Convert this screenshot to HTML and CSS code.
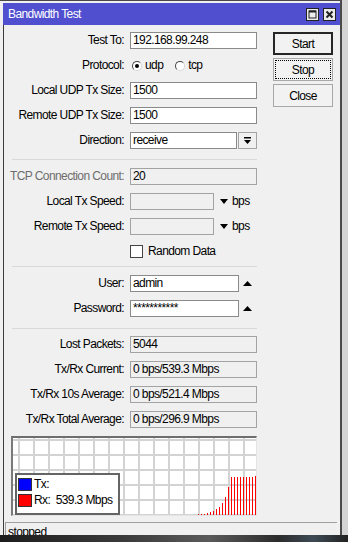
FILE: index.html
```html
<!DOCTYPE html>
<html lang="en">
<head>
  <meta charset="UTF-8" />
  <meta name="viewport" content="width=device-width, initial-scale=1.0"/>
  <title>Bandwidth Test</title>
  <link rel="stylesheet" href="styles.css">
</head>
<body>
  <div class="screen">
    <div class="window">
      <div class="titlebar">
        <span class="title">Bandwidth Test</span>
        <span class="tb-buttons">
          <span class="tb-btn">
            <svg width="11" height="11" viewBox="0 0 11 11"><rect x="2" y="2" width="7" height="7" fill="none" stroke="#222" stroke-width="1"/><rect x="2" y="1.5" width="7" height="2" fill="#222"/></svg>
          </span>
          <span class="tb-btn">
            <svg width="11" height="11" viewBox="0 0 11 11"><path d="M2.5 2.5 L8.5 8.5 M8.5 2.5 L2.5 8.5" stroke="#222" stroke-width="2"/></svg>
          </span>
        </span>
      </div>

      <div class="client">
        <div class="main">
          <div class="form">
            <div class="row">
              <label>Test To:</label>
              <div class="field"><input type="text" class="input" value="192.168.99.248"></div>
            </div>
            <div class="row">
              <label>Protocol:</label>
              <div class="field radios">
                <span class="radio checked"></span><span class="opt">udp</span>
                <span class="radio second"></span><span class="opt">tcp</span>
              </div>
            </div>
            <div class="row">
              <label>Local UDP Tx Size:</label>
              <div class="field"><input type="text" class="input" value="1500"></div>
            </div>
            <div class="row">
              <label>Remote UDP Tx Size:</label>
              <div class="field"><input type="text" class="input" value="1500"></div>
            </div>
            <div class="row">
              <label>Direction:</label>
              <div class="field">
                <input type="text" class="input w-dir" value="receive">
                <span class="drop-btn">
                  <svg width="7" height="7" viewBox="0 0 7 7"><rect x="0" y="0" width="7" height="1.5" fill="#000"/><polygon points="0,3 7,3 3.5,7" fill="#000"/></svg>
                </span>
              </div>
            </div>

            <div class="sep sep-1"></div>

            <div class="row">
              <label class="disabled">TCP Connection Count:</label>
              <div class="field"><input type="text" class="input ro" value="20"></div>
            </div>
            <div class="row">
              <label>Local Tx Speed:</label>
              <div class="field">
                <input type="text" class="input ro w-speed" value="">
                <svg class="arrow-down" width="8" height="5" viewBox="0 0 8 5"><polygon points="0,0 8,0 4,5" fill="#000"/></svg>
                <span class="unit">bps</span>
              </div>
            </div>
            <div class="row">
              <label>Remote Tx Speed:</label>
              <div class="field">
                <input type="text" class="input ro w-speed" value="">
                <svg class="arrow-down" width="8" height="5" viewBox="0 0 8 5"><polygon points="0,0 8,0 4,5" fill="#000"/></svg>
                <span class="unit">bps</span>
              </div>
            </div>
            <div class="row">
              <label></label>
              <div class="field"><span class="check"></span><span class="opt">Random Data</span></div>
            </div>

            <div class="sep sep-2"></div>

            <div class="row">
              <label>User:</label>
              <div class="field">
                <input type="text" class="input w-user" value="admin">
                <svg class="arrow-up" width="9" height="5" viewBox="0 0 9 5"><polygon points="0,5 9,5 4.5,0" fill="#000"/></svg>
              </div>
            </div>
            <div class="row">
              <label>Password:</label>
              <div class="field">
                <input type="text" class="input w-user" value="***********">
                <svg class="arrow-up" width="9" height="5" viewBox="0 0 9 5"><polygon points="0,5 9,5 4.5,0" fill="#000"/></svg>
              </div>
            </div>

            <div class="sep sep-3"></div>

            <div class="row">
              <label>Lost Packets:</label>
              <div class="field"><input type="text" class="input ro" value="5044"></div>
            </div>
            <div class="row">
              <label>Tx/Rx Current:</label>
              <div class="field"><input type="text" class="input ro" value="0 bps/539.3 Mbps"></div>
            </div>
            <div class="row">
              <label>Tx/Rx 10s Average:</label>
              <div class="field"><input type="text" class="input ro" value="0 bps/521.4 Mbps"></div>
            </div>
            <div class="row">
              <label>Tx/Rx Total Average:</label>
              <div class="field"><input type="text" class="input ro" value="0 bps/296.9 Mbps"></div>
            </div>

            <div class="graph">
              <div class="bars" id="bars"></div>
              <div class="legend">
                <div class="legend-row"><span class="swatch tx"></span><span>Tx:</span></div>
                <div class="legend-row"><span class="swatch rx"></span><span>Rx:  539.3 Mbps</span></div>
              </div>
            </div>
          </div>

          <div class="buttons">
            <button class="btn default">Start</button>
            <button class="btn focused">Stop</button>
            <button class="btn">Close</button>
          </div>
        </div>

        <div class="status">stopped</div>
      </div>
    </div>
  </div>
  <div class="desktop"></div>

  <script>
    // rx samples, oldest first (px high)
    const rx = [1, 1, 1, 2, 3, 4, 6, 8, 12, 18, 28, 38, 38, 38, 38, 38, 38, 38, 38, 39];
    const bars = document.getElementById("bars");
    rx.forEach(h => {
      const bar = document.createElement("span");
      bar.className = "bar";
      bar.style.height = h + "px";
      bars.appendChild(bar);
    });
  </script>
</body>
</html>
```

FILE: styles.css
```css
* {
  box-sizing: border-box;
}
body {
  margin: 0;
  background: #d4d4d4;
  font-family: "Liberation Sans", Arial, sans-serif;
  font-size: 12px;
  letter-spacing: -0.6px;
  color: #000;
}
.screen {
  height: 535px;
  overflow: hidden;
}
.window {
  width: 342px;
  height: 560px;
  background: #f0f0f0;
  border-top: 1px solid #4a4a4a;
  border-right: 2px solid #4a4a4a;
  padding: 2px 0 0 3px;
}
.titlebar {
  height: 22px;
  background: #4f4fcf;
  display: flex;
  align-items: center;
  justify-content: space-between;
  padding: 0 4px 0 5px;
}
.title {
  color: #fff;
  font-size: 12px;
}
.tb-buttons {
  display: flex;
  gap: 4px;
}
.tb-btn {
  width: 13px;
  height: 13px;
  background: #ececec;
  border: 1px solid #222;
  display: flex;
  align-items: center;
  justify-content: center;
}
.client {
  border-left: 1px solid #3c3c3c;
  height: 540px;
}
.main {
  display: flex;
  gap: 16px;
}
.form {
  display: flex;
  flex-direction: column;
  gap: 8px;
  padding-top: 7px;
  width: 253px;
}
.row {
  display: grid;
  grid-template-columns: 120px auto;
  column-gap: 6px;
  height: 17px;
  line-height: 17px;
}
.row label {
  text-align: right;
  white-space: nowrap;
}
.row label.disabled {
  color: #6d6d6d;
}
.field {
  display: flex;
  align-items: center;
}
.input {
  width: 127px;
  height: 17px;
  border: 1px solid #8a8a8a;
  background: #fff;
  padding: 0 0 0 2px;
  margin: 0;
  font: inherit;
  letter-spacing: inherit;
  color: #000;
  outline: none;
}
.input.ro {
  background: #f0f0f0;
  border-color: #a3a3a3;
}
.w-dir {
  width: 107px;
}
.w-speed {
  width: 84px;
}
.w-user {
  width: 109px;
}
.drop-btn {
  width: 19px;
  height: 17px;
  margin-left: 1px;
  border: 1px solid #a3a3a3;
  background: #f0f0f0;
  display: flex;
  align-items: center;
  justify-content: center;
}
.arrow-down {
  margin-left: 6px;
}
.arrow-up {
  margin-left: 4px;
}
.unit {
  margin-left: 4px;
}
.radios .radio {
  width: 10px;
  height: 10px;
  border-radius: 50%;
  background: #fff;
  border: 1px solid;
  border-color: #444 #d6d6d6 #d6d6d6 #444;
  margin-left: 2px;
  position: relative;
}
.radios .radio.second {
  margin-left: 12px;
}
.radio.checked::after {
  content: "";
  position: absolute;
  left: 2px;
  top: 2px;
  width: 4px;
  height: 4px;
  border-radius: 50%;
  background: #000;
}
.opt {
  margin-left: 3px;
}
.check {
  width: 13px;
  height: 13px;
  background: #fff;
  border: 1px solid #444;
}
.check + .opt {
  margin-left: 5px;
}
.sep {
  height: 1px;
  background: #d9d9d9;
  margin-left: 8px;
  width: 245px;
}
.sep-1 {
  margin-top: 2px;
}
.sep-2 {
  margin-top: -2px;
}
.sep-3 {
  margin-top: 3px;
  margin-bottom: -1px;
}
.graph {
  position: relative;
  margin-left: 7px;
  width: 246px;
  height: 80px;
  border-style: solid;
  border-width: 2px 1px 1px 2px;
  border-color: #6e6e6e #e4e4e4 #e4e4e4 #7a7a7a;
  background-color: #fff;
  background-image:
    linear-gradient(to right, #d3d3d3 2px, transparent 2px),
    linear-gradient(to bottom, #d3d3d3 2px, transparent 2px);
  background-size: 15px 15px;
  background-position: 5px 1px;
}
.bars {
  position: absolute;
  right: 0;
  bottom: 0;
  display: flex;
  align-items: flex-end;
  gap: 2px;
}
.bar {
  width: 1px;
  background: #ff0000;
}
.legend {
  position: absolute;
  left: 2px;
  bottom: 0;
  width: 105px;
  height: 42px;
  background: #fff;
  border: 2px solid #656565;
  padding: 1px 1px;
}
.legend-row {
  display: flex;
  align-items: center;
  gap: 2px;
  height: 16px;
  white-space: pre;
}
.swatch {
  width: 14px;
  height: 13px;
  border: 1px solid #333;
}
.swatch.tx {
  background: #0000ff;
}
.swatch.rx {
  background: #ff0000;
}
.buttons {
  display: flex;
  flex-direction: column;
  gap: 3px;
  padding-top: 7px;
}
.btn {
  width: 60px;
  height: 23px;
  background: #f2f2f2;
  border: 1px solid #a8a8a8;
  font: inherit;
  letter-spacing: inherit;
  color: #000;
  padding: 0;
}
.btn.default {
  border: 2px solid #262626;
}
.btn.focused {
  outline: 1px dotted #000;
  outline-offset: -3px;
}
.status {
  margin: 6px 3px 0 1px;
  height: 22px;
  border-top: 1px solid #a0a0a0;
  border-left: 1px solid #a0a0a0;
  padding: 2px 2px;
  line-height: 14px;
}
.desktop {
  height: 7px;
  background: linear-gradient(90deg, #1d1d1d, #3a3a3a 35%, #5a5a5a 60%, #2c2c2c 80%, #3d4a55 90%, #222);
}
```
